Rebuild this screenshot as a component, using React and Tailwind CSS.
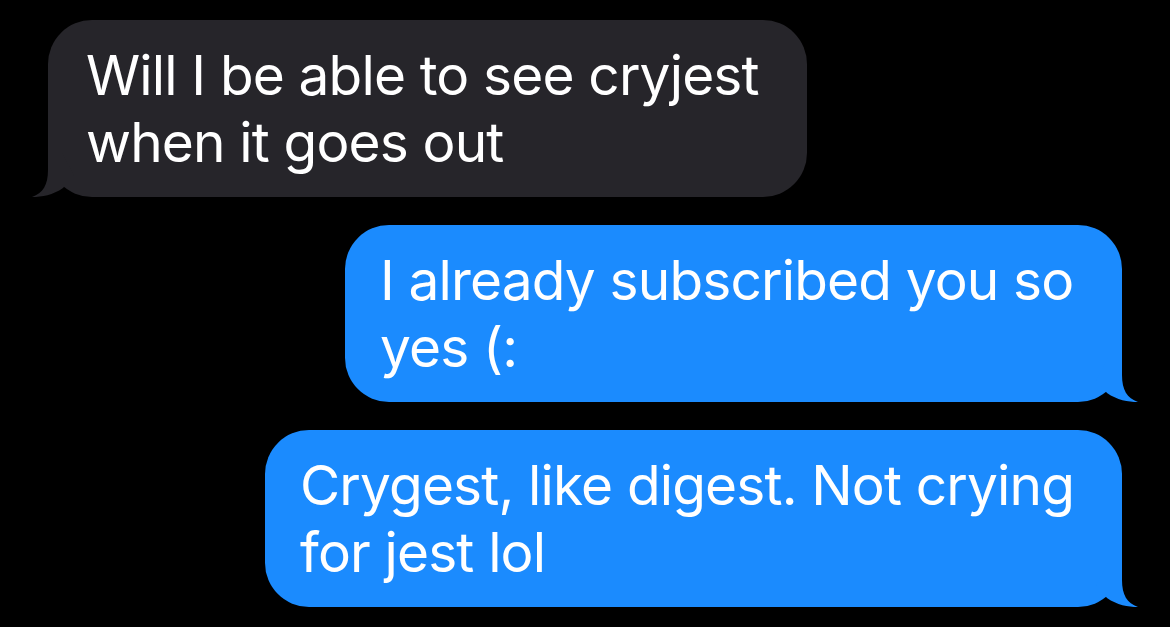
const Tail = ({ color, side }) => (
  <svg
    className={`absolute bottom-0 ${side === 'right' ? '-right-[16px]' : '-left-[16px] -scale-x-100'}`}
    width="50"
    height="44"
    viewBox="0 0 50 44"
  >
    <path
      d="M30 0 L34 0 L34 17 C34 32 39 40 50 44 C40 44 29 42 19 35 L8 22 L20 0 Z"
      fill={color}
    />
  </svg>
);

const Bubble = ({ from, width, lines }) => {
  const mine = from === 'me';
  const color = mine ? '#1b8bfe' : '#26252a';
  return (
    <div className={`flex ${mine ? 'justify-end' : 'justify-start'}`}>
      <div
        className={`relative h-[177px] rounded-[44px] pt-[22px] text-white ${width} ${
          mine ? 'bg-[#1b8bfe] pl-[35px]' : 'bg-[#26252a] pl-[38px]'
        }`}
      >
        <p className="relative z-10 whitespace-nowrap text-[55px] leading-[67px] tracking-[-0.85px]">
          {lines[0]}
          <br />
          {lines[1]}
        </p>
        <Tail color={color} side={mine ? 'right' : 'left'} />
      </div>
    </div>
  );
};

export default function App() {
  return (
    <div
      className="h-[627px] w-[1170px] overflow-hidden bg-black px-[48px] pt-[20px]"
      style={{ fontFamily: 'Inter, "Noto Sans", sans-serif' }}
    >
      <div className="flex flex-col gap-[28px]">
        <Bubble from="them" width="w-[759px]" lines={['Will I be able to see cryjest', 'when it goes out']} />
        <Bubble from="me" width="w-[777px]" lines={['I already subscribed you so', 'yes (:']} />
        <Bubble from="me" width="w-[857px]" lines={['Crygest, like digest. Not crying', 'for jest lol']} />
      </div>
    </div>
  );
}
